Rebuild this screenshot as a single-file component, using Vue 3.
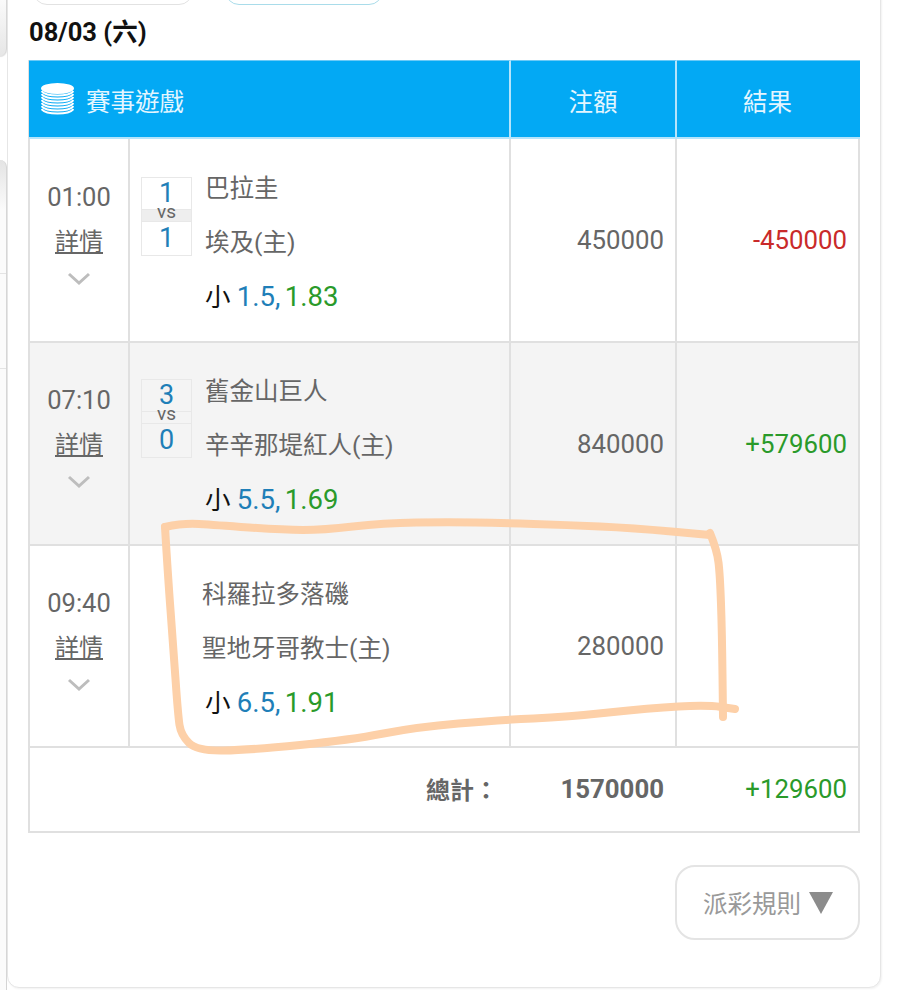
<script setup>
const rows = [
  { time: '01:00', home: '巴拉圭', away: '埃及(主)', score: ['1', '1'], line: '1.5,', odds: '1.83', bet: '450000', result: '-450000', tone: 'loss', striped: false },
  { time: '07:10', home: '舊金山巨人', away: '辛辛那堤紅人(主)', score: ['3', '0'], line: '5.5,', odds: '1.69', bet: '840000', result: '+579600', tone: 'win', striped: true },
  { time: '09:40', home: '科羅拉多落磯', away: '聖地牙哥教士(主)', score: null, line: '6.5,', odds: '1.91', bet: '280000', result: '', tone: '', striped: false }
]
const coinBands = [95, 98, 101, 104, 107, 110, 113]

const smooth = (pts) => {
  let d = `M${pts[0][0]} ${pts[0][1]}`
  for (let i = 1; i < pts.length - 1; i++) {
    const mx = (pts[i][0] + pts[i + 1][0]) / 2
    const my = (pts[i][1] + pts[i + 1][1]) / 2
    d += ` Q${pts[i][0]} ${pts[i][1]} ${mx} ${my}`
  }
  const end = pts[pts.length - 1]
  return `${d} L${end[0]} ${end[1]}`
}
const strokes = [
  [[165, 527], [183, 523], [215, 525], [283, 530], [323, 530], [383, 523], [450, 522], [500, 523], [567, 525], [633, 528], [710, 535]],
  [[165, 527], [168, 577], [173, 643], [178, 715], [181, 735], [197, 751], [250, 750], [350, 740], [417, 727], [500, 720], [567, 717], [650, 708], [707, 705], [735, 709]],
  [[710, 533], [717, 550], [720, 575], [722, 633], [723, 717]]
].map(smooth)
</script>

<template>
  <div class="page">
    <aside class="rail">
      <div class="stub stub-top"></div>
      <div class="stub stub-list">
        <div class="stub-row first"></div>
        <div class="stub-row"></div>
      </div>
    </aside>

    <main class="card">
      <div class="tabs">
        <div class="tab"></div>
        <div class="tab tab-active"></div>
      </div>
      <h2 class="date">08/03 (六)</h2>

      <section class="table">
        <div class="head head-game">
          <svg class="coins" viewBox="41 84 33 33" width="33" height="33">
            <ellipse cx="57.5" cy="89.5" rx="16.5" ry="5.5" fill="#fff" />
            <path v-for="y in coinBands" :key="y" :d="`M41.5 ${y - 3} C46 ${y + 3} 69 ${y + 3} 73.5 ${y - 3}`" fill="none" stroke="#fff" stroke-width="2" />
          </svg>
          <span>賽事遊戲</span>
        </div>
        <div class="head">注額</div>
        <div class="head head-last">結果</div>

        <template v-for="(row, i) in rows" :key="row.time">
          <div class="cell time-cell" :class="{ striped: row.striped, tall: i === 0 }">
            <div class="time">{{ row.time }}</div>
            <a class="detail">詳情</a>
            <svg class="chevron" width="24" height="14" viewBox="0 0 24 14">
              <path d="M2 2 L12 11 L22 2" fill="none" stroke="#bdbdbd" stroke-width="3" />
            </svg>
          </div>
          <div class="cell match-cell" :class="{ striped: row.striped, tall: i === 0, 'no-score': !row.score }">
            <div v-if="row.score" class="score">
              <div class="goal goal-top">{{ row.score[0] }}</div>
              <div class="vs">vs</div>
              <div class="goal">{{ row.score[1] }}</div>
            </div>
            <div class="teams">
              <div class="team">{{ row.home }}</div>
              <div class="team">{{ row.away }}</div>
              <div class="team pick">小 <span class="line">{{ row.line }}</span> <span class="odds">{{ row.odds }}</span></div>
            </div>
          </div>
          <div class="cell num" :class="{ striped: row.striped }">{{ row.bet }}</div>
          <div class="cell num last" :class="[row.tone, { striped: row.striped }]">{{ row.result }}</div>
        </template>

        <div class="total total-label">總計：</div>
        <div class="total total-bet">1570000</div>
        <div class="total total-result">+129600</div>
      </section>

      <div class="actions">
        <button class="rules">派彩規則<i class="triangle"></i></button>
      </div>
    </main>

    <svg class="scribble" width="914" height="990" viewBox="0 0 914 990">
      <path v-for="d in strokes" :key="d" :d="d" fill="none" stroke="#fdd0a8" stroke-width="8" stroke-linecap="round" stroke-linejoin="round" />
    </svg>
  </div>
</template>

<style scoped>
.page {
  position: relative;
  display: flex;
  width: 914px;
  height: 990px;
  overflow: hidden;
  background: #fff;
  font-family: Roboto, "Noto Sans CJK TC", sans-serif;
  color: #666;
}
.rail {
  display: flex;
  flex-direction: column;
  gap: 104px;
  width: 7px;
  flex: none;
}
.stub {
  border-right: 1px solid #d4d4d4;
}
.stub-top {
  height: 56px;
  background: linear-gradient(#fafafa, #e6e6e6);
  border-bottom-right-radius: 7px;
  box-shadow: 0 1px 1px #ddd;
}
.stub-list {
  flex: 1;
  background: linear-gradient(#e4e4e4, #fbfbfb 50px);
  border-top-right-radius: 7px;
}
.stub-row {
  height: 94px;
  border-bottom: 1px solid #e4e4e4;
}
.stub-row.first {
  height: 113px;
}
.card {
  width: 874px;
  height: 1008px;
  margin-top: -20px;
  padding: 0 20px;
  box-sizing: border-box;
  flex: none;
  background: #fff;
  border: 1px solid #e6e6e6;
  border-radius: 12px;
  box-shadow: 1px 1px 2px #f2f2f2;
}
.tabs {
  display: flex;
  gap: 32px;
  height: 24px;
  padding-left: 5px;
  box-sizing: border-box;
}
.tab {
  width: 160px;
  height: 24px;
  box-sizing: border-box;
  border: 1px solid #e2e2e2;
  border-radius: 0 0 14px 14px;
}
.tab-active {
  width: 158px;
  border-color: #a9dcea;
}
.date {
  margin: 10px 0 11px 1px;
  height: 34px;
  font-size: 25.5px;
  line-height: 34px;
  font-weight: 700;
  color: #111;
}
.table {
  display: grid;
  grid-template-columns: 100px 381px 166px 183px;
  grid-template-rows: 79px 204px 203px 202px 85px;
  border-left: 2px solid #e0e0e0;
}
.head {
  display: flex;
  align-items: center;
  justify-content: center;
  box-sizing: border-box;
  padding-top: 3px;
  background: #03a9f4;
  color: #e4f6ff;
  font-size: 24.5px;
  border-top: 1px solid #6ccaf7;
  border-right: 2px solid #b5e4fb;
  border-bottom: 2px solid #b5e4fb;
}
.head-game {
  grid-column: span 2;
  justify-content: flex-start;
  gap: 12px;
  padding-left: 12px;
  margin-left: -1px;
}
.head-last {
  border-right: 0;
  padding-right: 2px;
}
.coins {
  display: block;
  flex: none;
  margin-top: -2px;
}
.cell {
  box-sizing: border-box;
  border-right: 2px solid #e0e0e0;
  border-bottom: 2px solid #e0e0e0;
}
.striped {
  background: #f4f4f4;
}
.time-cell {
  display: flex;
  flex-direction: column;
  align-items: center;
  padding-top: 38px;
}
.time-cell.tall {
  padding-top: 39px;
}
.time {
  font-size: 25.5px;
  line-height: 38px;
}
.detail {
  margin-top: 7px;
  font-size: 24px;
  line-height: 38px;
  text-decoration: underline;
}
.chevron {
  display: block;
  margin-top: 11px;
}
.match-cell {
  display: flex;
  align-items: flex-start;
  gap: 13px;
  padding: 22px 0 0 11px;
}
.match-cell.tall {
  padding-top: 23px;
}
.match-cell.no-score {
  padding-left: 72px;
}
.no-score .pick {
  margin-left: 3px;
}
.score {
  width: 51px;
  height: 79px;
  margin-top: 14px;
  box-sizing: border-box;
  display: flex;
  flex-direction: column;
  border: 1px solid #e8e8e8;
  flex: none;
}
.tall .score {
  margin-top: 15px;
}
.goal {
  height: 33px;
  text-align: center;
  font-size: 27px;
  line-height: 33px;
  color: #1f7fb8;
}
.goal-top {
  height: 31px;
  line-height: 30px;
}
.vs {
  height: 13px;
  box-sizing: border-box;
  line-height: 3px;
  text-align: center;
  font-size: 19px;
  background: #eeeeee;
  border-top: 1px solid #e8e8e8;
  border-bottom: 1px solid #e8e8e8;
}
.striped .vs {
  background: #f4f4f4;
}
.team {
  font-size: 24.5px;
  line-height: 54px;
  white-space: nowrap;
}
.pick {
  color: #111;
  font-size: 25.5px;
}
.line {
  color: #1f7fb8;
  font-size: 27.5px;
}
.odds {
  color: #2a9a2a;
  font-size: 27.5px;
  margin-left: -2px;
}
.num {
  display: flex;
  align-items: center;
  justify-content: flex-end;
  padding: 0 11px 0 0;
  font-size: 25.8px;
}
.last {
  padding-right: 11px;
}
.loss {
  color: #c92a2a;
}
.win {
  color: #2a9a2a;
}
.total {
  display: flex;
  align-items: center;
  justify-content: flex-end;
  box-sizing: border-box;
  padding-bottom: 2px;
  border-bottom: 2px solid #e0e0e0;
  font-size: 25.8px;
}
.total-label {
  grid-column: span 2;
  padding-right: 13px;
  font-size: 24px;
  font-weight: 700;
}
.total-bet {
  padding-right: 13px;
  font-weight: 700;
}
.total-result {
  padding-right: 11px;
  color: #2a9a2a;
  border-right: 2px solid #e0e0e0;
}
.actions {
  display: flex;
  justify-content: flex-end;
  width: 832px;
  margin-top: 32px;
}
.rules {
  display: flex;
  align-items: center;
  gap: 8px;
  width: 185px;
  height: 75px;
  padding: 0 0 0 26px;
  box-sizing: border-box;
  background: #fff;
  border: 2px solid #e4e4e4;
  border-radius: 20px;
  font: 24.5px "Noto Sans CJK TC", sans-serif;
  color: #999;
}
.triangle {
  width: 0;
  height: 0;
  border-left: 12px solid transparent;
  border-right: 12px solid transparent;
  border-top: 22px solid #8c8c8c;
}
.scribble {
  position: absolute;
  top: 0;
  left: 0;
  pointer-events: none;
}
</style>
